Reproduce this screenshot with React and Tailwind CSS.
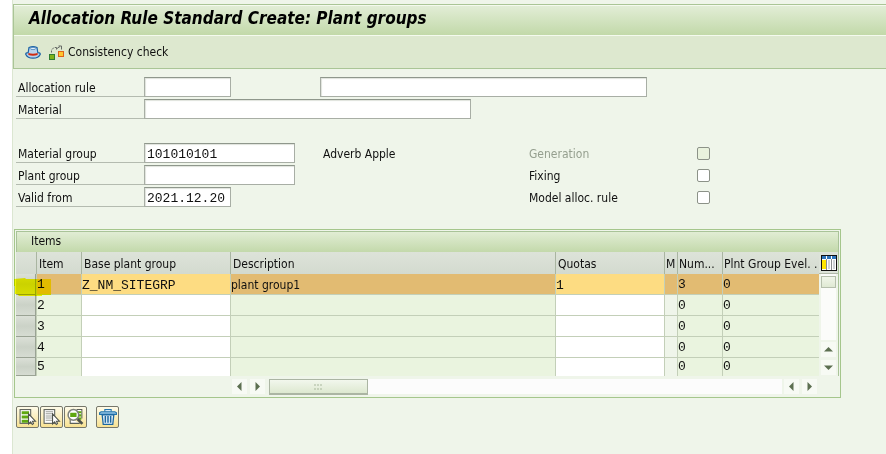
import React from "react";

const rows = [
  { item: "1", group: "Z_NM_SITEGRP", description: "plant group1", quota: "1", number: "3", level: "0", selected: true },
  { item: "2", group: "", description: "", quota: "", number: "0", level: "0" },
  { item: "3", group: "", description: "", quota: "", number: "0", level: "0" },
  { item: "4", group: "", description: "", quota: "", number: "0", level: "0" },
  { item: "5", group: "", description: "", quota: "", number: "0", level: "0" },
];

const mono = "font-['Liberation_Mono',monospace] text-[13px]";

function HatIcon() {
  return (
    <svg width="16" height="13" viewBox="0 0 16 13" aria-hidden="true">
      <path d="M.7 8.200Q.7 6.600 3.200 6.600L4 1.500Q8-.2 12 1.500l.8 5.100q2.500 0 2.500 1.600Q13.500 12.200 8 12.200T.7 8.200Z" fill="#b9d3ec" stroke="#1d63a5" strokeWidth="1.200" />
      <ellipse cx="8" cy="2.500" rx="2.800" ry="1.100" fill="#e4f0fa" stroke="#3a7ab5" strokeWidth=".7" />
      <path d="M3.400 7.100q4.600 1.400 9.200 0v1.800q-4.600 1.600-9.200 0Z" fill="#d02a10" />
    </svg>
  );
}

function CheckIcon() {
  return (
    <svg width="16" height="15" viewBox="0 0 16 15" aria-hidden="true">
      <rect x=".5" y="9.500" width="5" height="5" fill="#7fb21a" stroke="#2f7d32" />
      <rect x="9.500" y="6.500" width="5" height="5" fill="#ffc62e" stroke="#e0641a" />
      <path d="M2.500 7.500V5.500M3 4.500 5 2.500M6 2.500h1.500V4.500M8 3.500 11 1.500M9.500 1h3V4.500" fill="none" stroke="#666b66" />
    </svg>
  );
}

function SelectAllIcon({ filled }) {
  return (
    <svg width="19" height="18" viewBox="0 0 17 17" aria-hidden="true">
      <rect x="1.500" y="1.500" width="10" height="13" fill="#fff" stroke="#5b5f58" />
      {filled ? (
        <path d="M3 3h7v3H3ZM3 7h7v3H3ZM3 11h7v3H3Z" fill="#5fa711" />
      ) : (
        <path d="M3 3.500h7M3 5.500h7M3 7.500h7M3 9.500h7M3 11.500h7" stroke="#9a9d98" />
      )}
      <path d="M9.500 5.500v9.500l2-2 1.500 2.500 1.200-.8-1-2.200h2.800Z" fill="#fff" stroke="#4d514b" />
    </svg>
  );
}

function DetailIcon() {
  return (
    <svg width="19" height="18" viewBox="0 0 17 17" aria-hidden="true">
      <path d="M3.500 10v4.500h9M9.500 1.500h5V10" fill="#fff" stroke="#5b5f58" />
      <path d="M10 3h4v2h-4ZM11 6h3v2h-3ZM11 9h3v2h-3Z" fill="#5fa711" />
      <circle cx="6.500" cy="6.500" r="5" fill="#fff" stroke="#7c807a" strokeWidth="1.400" />
      <rect x="3.500" y="4.500" width="6" height="4" fill="#5fa711" />
      <path d="m10.500 10.500 4.500 4.500" stroke="#4d514b" strokeWidth="2.600" />
    </svg>
  );
}

function TrashIcon() {
  return (
    <svg width="18" height="18" viewBox="0 0 17 17" aria-hidden="true">
      <path d="M5.500 3.500v-2h6v2" fill="#d5e8f5" stroke="#2474ad" />
      <path d="M.5 6V4.500l1.500-1h13l1.500 1V6Z" fill="#8fc1e3" stroke="#2474ad" />
      <path d="M3 6.500h11l-1 9H4Z" fill="#e6f2fa" stroke="#1d67a0" strokeWidth="1.200" />
      <path d="M6 7.500v6.500M8.500 7.500v6.500M11 7.500v6.500" stroke="#1d67a0" strokeWidth="1.400" />
    </svg>
  );
}

function ColumnsIcon() {
  return (
    <svg width="16" height="16" viewBox="0 0 16 16" aria-hidden="true">
      <rect x=".5" y=".5" width="15" height="15" fill="#fff" stroke="#111" />
      <path d="M1 1h4v3H1ZM6 1h4v3H6ZM11 1h4v3h-4Z" fill="#2f76bd" />
      <path d="M1 5h4v9H1Z" fill="#ffe600" />
      <path d="M7 5h2v9H7ZM12 5h2v9h-2Z" fill="#cfd4d8" />
      <path d="M5.500 4v11M10.500 4v11" stroke="#8a8d90" />
    </svg>
  );
}

function Arrow({ label, d }) {
  return (
    <button type="button" aria-label={label} className="flex h-[15px] w-[15px] shrink-0 items-center justify-center bg-[#f7faf4]">
      <svg width="9" height="9" viewBox="0 0 9 9" aria-hidden="true">
        <path d={d} fill="#5c6f50" />
      </svg>
    </button>
  );
}

const LEFT = "M6.500 0v9L2 4.500Z";
const RIGHT = "M2.500 0v9L7 4.500Z";
const UP = "M0 6.500h9L4.500 2Z";
const DOWN = "M0 2.500h9L4.500 7Z";

function FieldRow({ id, label, width, value = "", children }) {
  return (
    <div className="flex h-5 items-stretch">
      <label htmlFor={id} className="w-32 shrink-0 border-b border-[#b4bbb0] pt-px pl-0.5 leading-5">{label}</label>
      <TextField id={id} width={width} value={value} />
      {children}
    </div>
  );
}

function TextField({ id, width, value = "", label }) {
  return (
    <input
      id={id}
      type="text"
      aria-label={label}
      defaultValue={value}
      className={`${width} ${mono} h-5 border border-[#a8aea5] border-t-[#8f978c] bg-white px-0.5 pt-0.5 shadow-[inset_1px_1px_1px_#dfe3dc] outline-none`}
    />
  );
}

function TickRow({ id, label, disabled }) {
  return (
    <div className="flex h-5 items-center">
      <label htmlFor={id} className={`w-[168px] pt-0.5 ${disabled ? "text-[#959f8f]" : ""}`}>{label}</label>
      <input
        id={id}
        type="checkbox"
        disabled={disabled}
        className="h-[13px] w-[13px] appearance-none rounded-[2px] border border-[#8c9288] bg-white checked:bg-[#5fa711] disabled:bg-[#e9f2dd]"
      />
    </div>
  );
}

function ToolButton({ label, children }) {
  return (
    <button
      type="button"
      aria-label={label}
      className="flex h-[22px] w-[23px] items-center justify-center rounded-[2px] border border-[#76776a] bg-linear-to-b from-[#fefbe9] to-[#f8e292]"
    >
      {children}
    </button>
  );
}

const headFill = "bg-linear-to-b from-[#dde3d9] to-[#d3dacf]";

function HeadCell({ children, tight }) {
  return (
    <th scope="col" className={`border-l border-[#a9b5a1] ${headFill} p-0 pt-px text-left font-normal ${tight ? "pl-px" : "pl-0.5"}`}>
      {children}
    </th>
  );
}

function ItemRow({ row, last }) {
  const shade = row.selected ? "bg-[#e2bb72]" : "bg-[#eaf4df]";
  const edit = row.selected ? "bg-[#fddc82]" : "bg-white";
  const cell = `border-l border-[#c3cfb8] p-0 ${last ? "" : "border-b"}`;
  const code = `${shade} ${mono} ${cell} ${last ? "" : "pt-0.5"}`;
  return (
    <tr className={last ? "h-[18px]" : "h-[21px]"}>
      <td className="border-r border-b border-[#9aa394] bg-linear-to-b from-[#dbe0d7] via-[#cbd2c7] to-[#d6dcd2] p-0">
        <button type="button" aria-label={`Select row ${row.item}`} className="block h-4 w-full" />
      </td>
      <td className={code}>{row.item}</td>
      <td className={`${edit} ${cell}`}>
        <input aria-label={`Base plant group ${row.item}`} defaultValue={row.group} className={`${mono} block h-[18px] w-full bg-transparent pt-0.5 outline-none`} />
      </td>
      <td className={`${shade} ${cell} ${row.selected ? "pt-0.5" : ""}`}>{row.description}</td>
      <td className={`${edit} ${cell}`}>
        <input aria-label={`Quota ${row.item}`} defaultValue={row.quota} className={`${mono} block h-[18px] w-full bg-transparent pt-0.5 outline-none`} />
      </td>
      <td className={`${row.selected ? shade : "bg-[#eff5ea]"} ${cell}`} />
      <td className={code}>{row.number}</td>
      <td className={code}>{row.level}</td>
    </tr>
  );
}

function ItemsPanel() {
  return (
    <section aria-labelledby="items-title" className="relative w-full max-w-[827px] border border-[#a5c68c] p-px">
      <h2 id="items-title" className="h-[21px] border border-b-0 border-[#a9c398] bg-linear-to-b from-[#e1edd4] to-[#c3d9ab] pl-3.5 leading-[18px]">Items</h2>
      <div className="flex border-r border-[#a9c398]">
        <div className="min-w-0 flex-1">
          <table className="w-full table-fixed border-separate border-spacing-0">
            <colgroup>
              <col className="w-5" />
              <col className="w-[45px]" />
              <col className="w-[149px]" />
              <col />
              <col className="w-[109px]" />
              <col className="w-[13px]" />
              <col className="w-[45px]" />
              <col className="w-[97px]" />
            </colgroup>
            <thead>
              <tr className="h-[22px] whitespace-nowrap">
                <th aria-label="Selection" className={headFill} />
                <HeadCell>Item</HeadCell>
                <HeadCell>Base plant group</HeadCell>
                <HeadCell>Description</HeadCell>
                <HeadCell>Quotas</HeadCell>
                <HeadCell tight>M</HeadCell>
                <HeadCell tight>Num...</HeadCell>
                <HeadCell tight>Plnt Group Evel. .</HeadCell>
              </tr>
            </thead>
            <tbody>
              {rows.map((row, i) => (
                <ItemRow key={row.item} row={row} last={i === rows.length - 1} />
              ))}
            </tbody>
          </table>
        </div>
        <div className="flex w-[19px] flex-col items-center pb-px">
          <button type="button" aria-label="Configure columns" className="flex h-[22px] w-full items-center justify-center border-b border-[#b1baa9] bg-[#dde3d9]">
            <ColumnsIcon />
          </button>
          <div className="w-[15px] flex-1 bg-[#fbfcfa] pt-0.5">
            <div className="h-3 w-full border border-[#b5bfac] bg-linear-to-b from-[#f1f6ea] to-[#dfe9d3]" />
          </div>
          <div className="flex flex-col gap-[3px] pt-0.5">
            <Arrow label="Scroll up" d={UP} />
            <Arrow label="Scroll down" d={DOWN} />
          </div>
        </div>
      </div>
      <div className="flex h-5 pt-[3px] pr-[22px] pl-[216px]">
        <div className="flex gap-[3px]">
          <Arrow label="Scroll left" d={LEFT} />
          <Arrow label="Scroll right" d={RIGHT} />
        </div>
        <div className="mr-0.5 ml-1 h-[15px] flex-1 bg-[#fcfcfc]">
          <div className="flex h-4 w-[99px] items-center justify-center border border-b-2 border-[#abb5a3] bg-linear-to-b from-[#f2f7ed] to-[#dde8d0]">
            <svg width="9" height="6" viewBox="0 0 9 6" aria-hidden="true">
              <path d="M0 1h2M3 1h2M6 1h2M0 5h2M3 5h2M6 5h2" stroke="#a9b89d" />
            </svg>
          </div>
        </div>
        <div className="flex gap-[3px]">
          <Arrow label="Scroll columns left" d={LEFT} />
          <Arrow label="Scroll columns right" d={RIGHT} />
        </div>
      </div>
      <svg className="pointer-events-none absolute top-12 -left-0.5 mix-blend-multiply" width="39" height="19" viewBox="0 0 39 19" aria-hidden="true">
        <path d="M1 1 12 0l1 1h25v16H29v1H6l-2-2H2V8H1Z" fill="#ffff00" />
      </svg>
    </section>
  );
}

export default function App() {
  return (
    <div className="min-h-screen bg-white pl-3 font-['DejaVu_Sans_Condensed','DejaVu_Sans',sans-serif] text-[12px] leading-4 text-[#101010]">
      <div className="min-h-screen border-l border-[#dbe6d1] bg-[#eff5ea] pt-1">
        <header className="border-t border-b border-l border-[#aac596]">
          <h1 className="h-[31px] border-t border-b border-[#f4faee] bg-linear-to-b from-[#e2edd6] to-[#c2d9a9] pl-[15px] text-[17px] leading-6 font-bold italic text-black">
            Allocation Rule Standard Create: Plant groups
          </h1>
          <div className="flex h-8 items-center gap-2 bg-[#dde8cf] pl-[11px]">
            <button type="button" aria-label="Header"><HatIcon /></button>
            <button type="button" className="flex items-center gap-[3px]">
              <CheckIcon />
              Consistency check
            </button>
          </div>
        </header>
        <main className="px-px pt-2">
          <form className="pl-0.5">
            <div className="flex flex-col gap-0.5">
              <FieldRow id="rule" label="Allocation rule" width="w-[87px]">
                <div className="ml-[89px]">
                  <TextField id="rule-text" label="Allocation rule description" width="w-[327px]" />
                </div>
              </FieldRow>
              <FieldRow id="material" label="Material" width="w-[327px]" />
            </div>
            <div className="mt-6 flex">
              <div className="flex w-[307px] flex-col gap-0.5">
                <FieldRow id="material-group" label="Material group" width="w-[151px]" value="101010101" />
                <FieldRow id="plant-group" label="Plant group" width="w-[151px]" />
                <FieldRow id="valid-from" label="Valid from" width="w-[87px]" value="2021.12.20" />
              </div>
              <p className="w-[206px] pt-px leading-5">Adverb Apple</p>
              <div className="flex flex-col gap-0.5">
                <TickRow id="generation" label="Generation" disabled />
                <TickRow id="fixing" label="Fixing" />
                <TickRow id="model" label="Model alloc. rule" />
              </div>
            </div>
          </form>
          <div className="mt-[22px]">
            <ItemsPanel />
          </div>
          <div className="mt-2 flex gap-px pl-0.5">
            <ToolButton label="Select all"><SelectAllIcon filled /></ToolButton>
            <ToolButton label="Deselect all"><SelectAllIcon /></ToolButton>
            <ToolButton label="Details"><DetailIcon /></ToolButton>
            <div className="ml-2">
              <ToolButton label="Delete"><TrashIcon /></ToolButton>
            </div>
          </div>
        </main>
      </div>
    </div>
  );
}
